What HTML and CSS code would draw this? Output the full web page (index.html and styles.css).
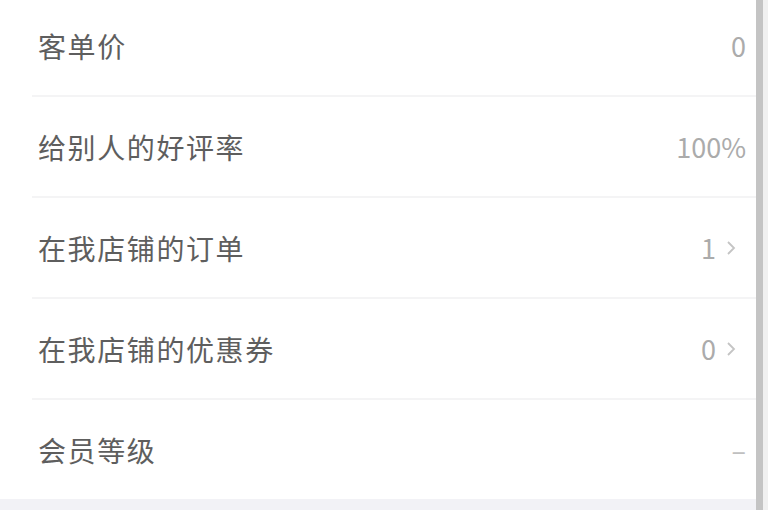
FILE: index.html
```html
<!DOCTYPE html>
<html lang="zh-CN">
<head>
<meta charset="utf-8">
<link rel="stylesheet" href="styles.css">
</head>
<body>
<div class="page">
  <div class="main">
    <ul class="list">
      <li class="row"><span class="label">客单价</span><span class="value">0</span></li>
      <li class="row"><span class="label">给别人的好评率</span><span class="value">100%</span></li>
      <li class="row"><span class="label">在我店铺的订单</span><span class="value link">1<svg class="chev" viewBox="0 0 10 16" width="10" height="16"><path d="M2 2 L8 8 L2 14" fill="none" stroke="#c4c4c4" stroke-width="1.8"/></svg></span></li>
      <li class="row"><span class="label">在我店铺的优惠券</span><span class="value link">0<svg class="chev" viewBox="0 0 10 16" width="10" height="16"><path d="M2 2 L8 8 L2 14" fill="none" stroke="#c4c4c4" stroke-width="1.8"/></svg></span></li>
      <li class="row last"><span class="label">会员等级</span><span class="value dash">–</span></li>
    </ul>
    <div class="band"></div>
  </div>
  <div class="scroll"><div class="thumb"></div></div>
</div>
</body>
</html>
```
FILE: styles.css
```css
html, body {
  margin: 0;
  padding: 0;
  background: #ffffff;
  overflow: hidden;
}
.page {
  display: flex;
  width: 768px;
  height: 510px;
  font-family: "Noto Sans CJK SC", "Noto Sans", sans-serif;
}
.main {
  flex: 1;
  display: flex;
  flex-direction: column;
  background: #ffffff;
}
.list {
  list-style: none;
  margin: -4px 0 0 32px;
  padding: 0;
  flex: 1;
}
.row {
  display: flex;
  align-items: center;
  justify-content: space-between;
  height: 99px;
  padding: 0 10px 0 6px;
  border-bottom: 2px solid #f4f4f5;
}
.row.last {
  border-bottom: none;
}
.label {
  font-size: 28px;
  color: #5e5e5e;
  letter-spacing: 1.6px;
}
.value {
  font-size: 27px;
  color: #ababab;
  display: flex;
  align-items: center;
}
.value.link {
  margin-right: 10px;
}
.chev {
  margin-left: 10px;
}
.dash {
  color: #c0c0c0;
}
.band {
  height: 12px;
  background: #f2f2f6;
}
.scroll {
  width: 12px;
  background: #f0f0f0;
  display: flex;
}
.thumb {
  width: 7px;
  background: #c4c4c4;
}
```
